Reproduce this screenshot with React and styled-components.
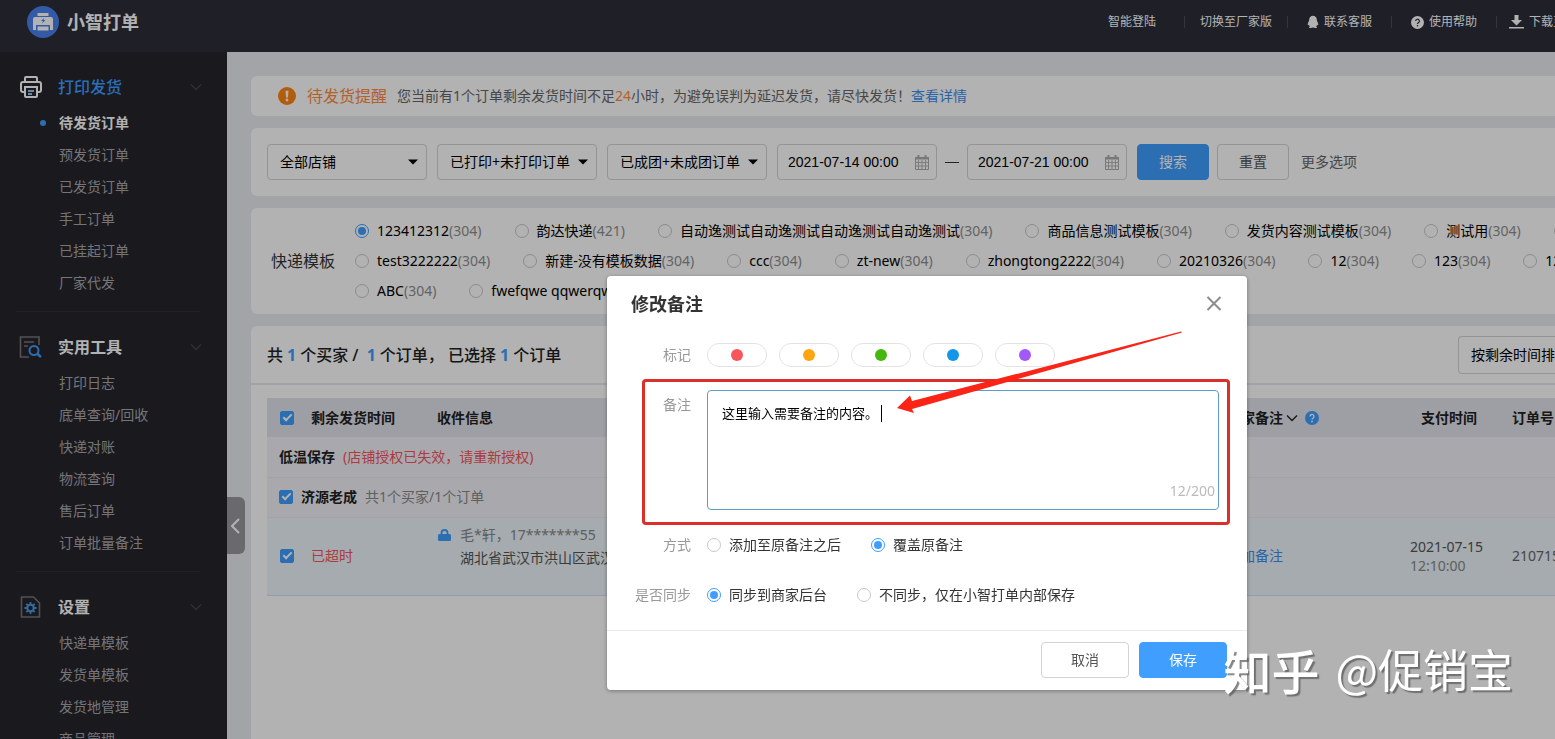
import React, { useState } from "react";
import styled, { createGlobalStyle } from "styled-components";

const sans = `"Noto Sans", "Noto Sans CJK SC", sans-serif`;
const blue = "#409eff";

const GlobalStyle = createGlobalStyle`
  *, *::before, *::after { box-sizing: border-box; }
  body { margin: 0; font: 14px/20px ${sans}; color: #333; overflow: hidden; }
  button, input, select, textarea { font: inherit; color: inherit; margin: 0; }
  a { text-decoration: none; color: inherit; }
  ul { list-style: none; margin: 0; padding: 0; }
  svg { display: block; flex: none; }
`;

const Page = styled.div`
  display: flex;
  flex-direction: column;
  height: 100vh;
  overflow: hidden;
`;

/* ---------- header ---------- */

const Header = styled.header`
  flex: none;
  display: flex;
  align-items: center;
  justify-content: space-between;
  height: 52px;
  padding: 0 0 8px 27px;
  background: #2b2d39;
  color: #fff;
`;

const Brand = styled.a`
  display: flex;
  align-items: center;
  gap: 8px;
  font-size: 18px;
  font-weight: 700;
  line-height: 24px;
`;

const TopNav = styled.nav`
  display: flex;
  align-items: center;
`;

const TopLink = styled.a`
  display: flex;
  align-items: center;
  gap: 5px;
  height: 12px;
  padding: 0 ${(p) => p.$pad}px;
  border-right: 1px solid #4a4b57;
  font-size: 12px;
  line-height: 18px;
  white-space: nowrap;
`;

const EdgeLink = styled(TopLink)`
  width: 58px;
  padding-right: 0;
  border-right: 0;
  height: 18px;
  overflow: hidden;
`;

/* ---------- sidebar ---------- */

const Body = styled.div`
  flex: 1;
  display: flex;
  min-height: 0;
`;

const Sidebar = styled.aside`
  flex: none;
  width: 227px;
  padding-top: 15px;
  background: #25252c;
  overflow: hidden;
`;

const Group = styled.section`
  & + &::before {
    content: "";
    display: block;
    height: 1px;
    margin: 12px 27px 15px 16px;
    background: #303038;
  }
`;

const GroupTitle = styled.button`
  display: grid;
  grid-template-columns: 24px 1fr 12px;
  column-gap: 15px;
  align-items: center;
  width: 100%;
  height: 40px;
  padding: 0 25px 0 19px;
  border: 0;
  background: none;
  color: ${(p) => (p.$active ? blue : "#fff")};
  font-size: 16px;
  font-weight: ${(p) => (p.$active ? 500 : 700)};
  text-align: left;
`;

const MenuLink = styled.a`
  display: flex;
  align-items: center;
  height: 32px;
  padding-left: 40px;
  color: ${(p) => (p.$active ? "#fff" : "#a8a8ac")};
  font-weight: ${(p) => (p.$active ? 700 : 400)};
  &::before {
    content: "";
    width: 6px;
    height: 6px;
    margin-right: 13px;
    border-radius: 50%;
    background: ${(p) => (p.$active ? blue : "transparent")};
  }
`;

/* ---------- content ---------- */

const Content = styled.main`
  position: relative;
  flex: 1;
  min-width: 0;
  display: flex;
  flex-direction: column;
  gap: 12px;
  padding: 24px 0 0 24px;
  background: #e9ebf0;
`;

const Fold = styled.button`
  position: absolute;
  left: 0;
  top: 445px;
  display: grid;
  place-items: center;
  width: 18px;
  height: 57px;
  padding: 0;
  border: 0;
  border-radius: 0 6px 6px 0;
  background: #98999e;
`;

const Card = styled.section`
  background: #fff;
  border-radius: 6px 0 0 6px;
`;

const Notice = styled(Card)`
  display: flex;
  align-items: center;
  height: 40px;
  padding-left: 27px;
  color: #666;
  white-space: nowrap;
`;

const NoticeTitle = styled.strong`
  margin: 0 10px 0 11px;
  font-size: 16px;
  font-weight: 400;
  color: #ff8b3d;
`;

const Orange = styled.span`
  color: #ff8b3d;
`;

const BlueLink = styled.a`
  color: #3d8ef0;
`;

const Filters = styled(Card)`
  display: flex;
  align-items: center;
  gap: 10px;
  padding: 16px;
  white-space: nowrap;
`;

const Field = styled.label`
  display: flex;
  align-items: center;
  position: relative;
  width: 160px;
  height: 36px;
  border: 1px solid #d4d4d6;
  border-radius: 4px;
  color: #000;
  svg {
    position: absolute;
    right: ${(p) => p.$inset || 8}px;
    pointer-events: none;
  }
`;

const Select = styled.select`
  appearance: none;
  width: 100%;
  height: 100%;
  padding: 0 8px 0 12px;
  border: 0;
  background: none;
`;

const DateInput = styled.input`
  width: 100%;
  height: 100%;
  padding: 0 10px;
  border: 0;
  background: none;
  font-family: "Liberation Sans", sans-serif;
`;

const Dash = styled.span`
  width: 10px;
  display: flex;
  justify-content: center;
  &::before {
    content: "";
    flex: none;
    width: 14px;
    height: 1px;
    background: #333;
  }
`;

const Button = styled.button`
  width: ${(p) => p.$width || 72}px;
  height: 36px;
  padding: 0;
  border: 1px solid ${(p) => (p.$primary ? blue : "#d4d4d6")};
  border-radius: 4px;
  background: ${(p) => (p.$primary ? blue : "#fff")};
  color: ${(p) => (p.$primary ? "#fff" : "#555")};
`;

const FilterActions = styled.div`
  display: flex;
  align-items: center;
  gap: 8px;
`;

const MoreLink = styled.a`
  margin-left: 2px;
  color: #666;
`;

const Templates = styled(Card).attrs({ as: "fieldset" })`
  display: flex;
  align-items: center;
  gap: 20px;
  margin: 0;
  padding: 8px 0 8px 20px;
  border: 0;
  min-width: 0;
  overflow: hidden;
`;

const TemplateLabel = styled.span`
  flex: none;
  font-size: 16px;
`;

const TemplateRow = styled.div`
  display: flex;
  align-items: center;
  gap: 33px;
  height: 30px;
  white-space: nowrap;
`;

const Choice = styled.label`
  display: flex;
  align-items: center;
  flex: none;
  gap: 8px;
  color: ${(p) => p.$color || "#000"};
`;

const Radio = styled.input.attrs({ type: "radio" })`
  appearance: none;
  flex: none;
  display: grid;
  place-items: center;
  width: 14px;
  height: 14px;
  border: 1px solid #c8c8cc;
  border-radius: 50%;
  background: #fff;
  &:checked { border-color: ${blue}; }
  &:checked::after {
    content: "";
    width: 8px;
    height: 8px;
    border-radius: 50%;
    background: ${blue};
  }
`;

const Count = styled.span`
  color: #8f8f8f;
`;

/* ---------- orders ---------- */

const Orders = styled(Card)`
  flex: 1;
  min-height: 0;
  overflow: hidden;
  border-bottom-left-radius: 0;
`;

const Summary = styled.div`
  display: flex;
  align-items: center;
  justify-content: space-between;
  height: 59px;
  padding-left: 16px;
  border-bottom: 2px solid #e6e8ec;
`;

const SummaryText = styled.p`
  margin: 0;
  font-size: 16px;
  font-weight: 500;
  color: #222;
  white-space: pre;
  b {
    margin: 0 4px;
    color: ${blue};
  }
`;

const SortButton = styled.button`
  width: 97px;
  height: 38px;
  padding: 0 0 0 12px;
  border: 1px solid #d4d4d6;
  border-right: 0;
  border-radius: 4px 0 0 4px;
  background: #fff;
  color: #000;
  text-align: left;
  white-space: nowrap;
  overflow: hidden;
`;

const TableWrap = styled.div`
  padding: 13px 0 0 16px;
`;

const Table = styled.table`
  width: 100%;
  table-layout: fixed;
  border-collapse: collapse;
  th, td {
    padding: 0;
    text-align: left;
    white-space: nowrap;
    overflow: hidden;
  }
`;

const Col = styled.col`
  width: ${(p) => (p.$w ? p.$w + "px" : "auto")};
`;

const HeadRow = styled.tr`
  height: 39px;
  background: #e3e4ec;
  color: #222;
`;

const ShopRow = styled.tr`
  height: 40px;
  background: #f3f3f8;
  border-bottom: 1px solid #e9e9ef;
`;

const OrderRow = styled.tr`
  height: 78px;
  background: #edf5fa;
  border-bottom: 1px solid #d5e1ee;
`;

const Inline = styled.div`
  display: flex;
  align-items: center;
  gap: ${(p) => p.$gap || 8}px;
  padding-left: ${(p) => p.$left || 0}px;
`;

const PayHead = styled.div`
  padding-right: 24px;
  text-align: center;
`;

const PayTime = styled.div`
  line-height: 19px;
  color: #555;
  span {
    display: block;
    color: #888;
  }
`;

const Buyer = styled.div`
  display: grid;
  grid-template-columns: 15px 1fr;
  column-gap: 8px;
  align-items: center;
  line-height: 23px;
  color: #555;
  padding-bottom: 20px;
  svg { justify-self: center; }
  p { margin: 0; }
  p:first-of-type { color: #888; }
  p:last-of-type { grid-column: 2; }
`;

const Danger = styled.span`
  color: #f5555d;
`;

const Muted = styled.span`
  color: #888;
`;

const OrderNo = styled.span`
  color: #666;
`;

const ShopName = styled.b`
  color: #222;
`;

const Check = styled.input.attrs({ type: "checkbox" })`
  appearance: none;
  flex: none;
  display: grid;
  place-items: center;
  width: 14px;
  height: 14px;
  border: 1px solid #c8c8cc;
  border-radius: 2px;
  background: #fff;
  &:checked {
    border-color: ${blue};
    background: ${blue};
  }
  &:checked::after {
    content: "";
    width: 9px;
    height: 5px;
    margin-bottom: 3px;
    border: solid #fff;
    border-width: 0 0 2px 2px;
    transform: rotate(-45deg);
  }
`;

/* ---------- dialog ---------- */

const Overlay = styled.div`
  position: fixed;
  inset: 0;
  display: flex;
  justify-content: center;
  align-items: flex-start;
  padding: 276px 0 0 299px;
  background: rgba(0, 0, 0, 0.3);
`;

const Dialog = styled.form`
  position: relative;
  width: 640px;
  border-radius: 4px;
  background: #fff;
  box-shadow: 0 1px 4px rgba(0, 0, 0, 0.35);
`;

const DialogHead = styled.div`
  display: flex;
  align-items: center;
  justify-content: space-between;
  height: 56px;
  padding: 0 24px;
  h2 {
    margin: 0;
    font-size: 18px;
    line-height: 24px;
    color: #333;
  }
`;

const CloseButton = styled.button`
  padding: 0;
  border: 0;
  background: none;
`;

const FormBody = styled.div`
  padding: 0 28px 10px 24px;
`;

const FormRow = styled.div`
  display: grid;
  grid-template-columns: 60px 1fr;
  column-gap: 16px;
  align-items: ${(p) => (p.$top ? "start" : "center")};
  min-height: ${(p) => p.$height || 50}px;
`;

const FormLabel = styled.label`
  color: #999;
  text-align: right;
  white-space: nowrap;
  padding-top: ${(p) => p.$drop || 0}px;
`;

const Marks = styled.div`
  display: flex;
  gap: 12px;
`;

const Mark = styled.button`
  display: grid;
  place-items: center;
  width: 60px;
  height: 24px;
  padding: 0;
  border: 1px solid #e4e4e7;
  border-radius: 12px;
  background: #fff;
  &::after {
    content: "";
    width: 12px;
    height: 12px;
    border-radius: 50%;
    background: ${(p) => p.$color};
  }
`;

const NoteSlot = styled.div`
  padding-top: 12px;
`;

const NoteBox = styled.div`
  position: relative;
  height: 120px;
`;

const NoteInput = styled.textarea`
  display: block;
  width: 100%;
  height: 100%;
  padding: 12px 14px;
  border: 1px solid #5c9fc4;
  border-radius: 4px;
  outline: 0;
  resize: none;
  background: #fff;
  color: #000;
  font-size: 13px;
`;

const Caret = styled.i`
  position: absolute;
  left: 174px;
  top: 15px;
  width: 1px;
  height: 17px;
  background: #000;
`;

const NoteCount = styled.output`
  position: absolute;
  right: 4px;
  bottom: 9px;
  color: #bbb;
`;

const Options = styled.div`
  display: flex;
  gap: 30px;
`;

const DialogFoot = styled.div`
  display: flex;
  justify-content: flex-end;
  gap: 10px;
  padding: 11px 20px 12px;
  border-top: 1px solid #ebebeb;
`;

const RedFrame = styled.div`
  position: absolute;
  left: 35px;
  top: 103px;
  width: 588px;
  height: 146px;
  border: 3px solid #d9302a;
  border-radius: 4px;
  pointer-events: none;
`;

const Arrow = styled.svg`
  position: absolute;
  left: 288px;
  top: 54px;
  pointer-events: none;
`;

const Watermark = styled.div`
  position: fixed;
  right: 42px;
  bottom: 38px;
  display: flex;
  align-items: center;
  gap: 16px;
  font: 45px/64px "Noto Sans CJK SC", sans-serif;
  color: #fff;
  text-shadow: 2px 2px 1px rgba(90, 90, 90, 0.75);
  white-space: nowrap;
  pointer-events: none;
  b {
    font-size: 48px;
    font-weight: 500;
  }
`;

/* ---------- icons ---------- */

const LogoIcon = () => (
  <svg width="32" height="32" viewBox="0 0 32 32">
    <circle cx="16" cy="16" r="16" fill="#4a82f0" />
    <path d="M10.500 7h11v3h-11z" fill="#fff" />
    <path d="M8 11h16a2 2 0 0 1 2 2V24h-3v-5H9v5H6V13a2 2 0 0 1 2-2z" fill="#fff" />
    <path d="M10.500 20.500h11v4h-11z" fill="#fff" />
    <path d="M17 12l-3 3h2l-1 2.500 3.500-3.500h-2z" fill="#4a82f0" />
  </svg>
);

const PrinterIcon = () => (
  <svg width="24" height="24" viewBox="0 0 24 24" fill="none" stroke="#fff" strokeWidth="2">
    <path d="M6 7V3a1 1 0 0 1 1-1h10a1 1 0 0 1 1 1v4" />
    <path d="M6 17H4a2 2 0 0 1-2-2V9a2 2 0 0 1 2-2h16a2 2 0 0 1 2 2v6a2 2 0 0 1-2 2h-2" />
    <path d="M6 12h12v9a1 1 0 0 1-1 1H7a1 1 0 0 1-1-1z" />
    <path d="M9 16h6M9 19h4" stroke="#8fc4f5" />
  </svg>
);

const ToolsIcon = () => (
  <svg width="24" height="24" viewBox="0 0 24 24" fill="none" stroke="#77777b" strokeWidth="1.600">
    <path d="M20 10V2H1.500v20H10" />
    <path d="M5 7h10M5 11h4" />
    <circle cx="15" cy="15.500" r="4.500" stroke={blue} strokeWidth="2" />
    <path d="M18.500 19l3.500 3" stroke={blue} strokeWidth="2.500" />
  </svg>
);

const SettingsIcon = () => (
  <svg width="24" height="24" viewBox="0 0 24 24" fill="none">
    <path d="M2.500 2h12l6 6v14h-18z" stroke="#77777b" strokeWidth="1.600" strokeLinejoin="round" />
    <g stroke="#4b9be8" strokeWidth="2">
      <circle cx="11.500" cy="13" r="3.200" />
      <path d="M11.500 7v3M11.500 16v3M5.500 13h3M14.500 13h3M7.300 8.800l2 2M13.700 15.200l2 2M15.700 8.800l-2 2M9.300 15.200l-2 2" strokeWidth="1.800" />
    </g>
  </svg>
);

const Chevron = ({ color = "#45454d" }) => (
  <svg width="12" height="8" viewBox="0 0 12 8" fill="none" stroke={color} strokeWidth="1.400">
    <path d="M1 1.500l5 5 5-5" />
  </svg>
);

const Triangle = () => (
  <svg width="10" height="6" viewBox="0 0 10 6">
    <path d="M0 .5h10L5 5.500z" fill="#000" />
  </svg>
);

const CalendarIcon = () => (
  <svg width="14" height="15" viewBox="0 0 14 15" fill="none" stroke="#adadad">
    <path d="M.5 2.500h13v12H.5z" />
    <path d="M0 3.500h14" strokeWidth="2" />
    <path d="M3.500 0v3M10.500 0v3" strokeWidth="2" />
    <path d="M3.500 5v9M7 5v9M10.500 5v9M1 7.500h12M1 11h12" strokeWidth=".9" />
  </svg>
);

const QQIcon = () => (
  <svg width="12" height="14" viewBox="0 0 12 14" fill="#fff">
    <path d="M6 .8c2.300 0 3.800 1.700 3.800 3.900 0 .7.100 1 .5 1.700.7 1.200 1.200 2.600.9 3.700-.2.500-.7.200-1.200-.4-.1.700-.4 1.200-.9 1.700.7.300 1 .6.900 1.100-.3.700-2.700.6-4 .1-1.300.5-3.700.6-4-.1-.1-.5.200-.8.900-1.100-.5-.5-.8-1-.9-1.700-.5.600-1 .9-1.200.4-.3-1.100.2-2.500.9-3.700.4-.7.500-1 .5-1.700C2.200 2.500 3.700.8 6 .8z" />
  </svg>
);

const HelpIcon = ({ size = 13, bg = "#fff", fg = "#2b2d39" }) => (
  <svg width={size} height={size} viewBox="0 0 14 14">
    <circle cx="7" cy="7" r="7" fill={bg} />
    <path d="M5 5.500a2 2 0 1 1 3 1.700c-.7.400-1 .7-1 1.400" fill="none" stroke={fg} strokeWidth="1.300" />
    <circle cx="7" cy="10.500" r=".9" fill={fg} />
  </svg>
);

const DownloadIcon = () => (
  <svg width="15" height="14" viewBox="0 0 15 14" fill="#fff">
    <path d="M5.500 0h4v5h3.500L7.500 10.500 2 5h3.500zM0 12h15v1.500H0z" />
  </svg>
);

const WarnIcon = () => (
  <svg width="18" height="18" viewBox="0 0 18 18">
    <circle cx="9" cy="9" r="9" fill="#ff8412" />
    <path d="M7.500 3.800h3L10 10.500H8z" fill="#fff" />
    <circle cx="9" cy="13" r="1.400" fill="#fff" />
  </svg>
);

const LockIcon = () => (
  <svg width="13" height="12" viewBox="0 0 13 12">
    <path d="M3.500 6V4a3 3 0 0 1 6 0v2" fill="none" stroke={blue} strokeWidth="1.800" />
    <rect x="0" y="5" width="13" height="7" rx="1.500" fill={blue} />
  </svg>
);

/* ---------- data ---------- */

const menu = [
  {
    title: "打印发货",
    Icon: PrinterIcon,
    active: true,
    items: ["待发货订单", "预发货订单", "已发货订单", "手工订单", "已挂起订单", "厂家代发"],
  },
  {
    title: "实用工具",
    Icon: ToolsIcon,
    items: ["打印日志", "底单查询/回收", "快递对账", "物流查询", "售后订单", "订单批量备注"],
  },
  {
    title: "设置",
    Icon: SettingsIcon,
    items: ["快递单模板", "发货单模板", "发货地管理", "商品管理"],
  },
];

const templates = [
  [
    ["123412312", 304],
    ["韵达快递", 421],
    ["自动逸测试自动逸测试自动逸测试自动逸测试", 304],
    ["商品信息测试模板", 304],
    ["发货内容测试模板", 304],
    ["测试用", 304],
    ["测试", 304],
  ],
  [
    ["test3222222", 304],
    ["新建-没有模板数据", 304],
    ["ccc", 304],
    ["zt-new", 304],
    ["zhongtong2222", 304],
    ["20210326", 304],
    ["12", 304],
    ["123", 304],
    ["1234", 304],
  ],
  [
    ["ABC", 304],
    ["fwefqwe qqwerqwer", 304],
  ],
];

const marks = [
  ["红色", "#f7575c"],
  ["橙色", "#ffa50f"],
  ["绿色", "#45b80c"],
  ["蓝色", "#1296e8"],
  ["紫色", "#a259f7"],
];

const SelectField = ({ label, value }) => (
  <Field>
    <Select aria-label={label} defaultValue={value}>
      <option>{value}</option>
    </Select>
    <Triangle />
  </Field>
);

const DateField = ({ label, value }) => (
  <Field $inset={7}>
    <DateInput type="text" aria-label={label} defaultValue={value} />
    <CalendarIcon />
  </Field>
);

function NoteArea({ note, setNote }) {
  return (
    <NoteSlot>
      <NoteBox>
        <NoteInput id="note" maxLength={200} value={note} onChange={(e) => setNote(e.target.value)} />
        <Caret />
        <NoteCount htmlFor="note">{note.length}/200</NoteCount>
      </NoteBox>
    </NoteSlot>
  );
}

export default function App() {
  const [note, setNote] = useState("这里输入需要备注的内容。");

  return (
    <Page lang="zh-CN">
      <GlobalStyle />
      <Header>
        <Brand href="#">
          <LogoIcon />
          小智打单
        </Brand>
        <TopNav>
          <TopLink href="#" $pad={28}>智能登陆</TopLink>
          <TopLink href="#" $pad={15}>切换至厂家版</TopLink>
          <TopLink href="#" $pad={19}><QQIcon />联系客服</TopLink>
          <TopLink href="#" $pad={19}><HelpIcon />使用帮助</TopLink>
          <EdgeLink href="#" $pad={12}><DownloadIcon />下载至桌面</EdgeLink>
        </TopNav>
      </Header>

      <Body>
        <Sidebar>
          {menu.map(({ title, Icon, active, items }) => (
            <Group key={title}>
              <GroupTitle type="button" $active={active}>
                <Icon />
                {title}
                <Chevron />
              </GroupTitle>
              <ul>
                {items.map((item, i) => (
                  <li key={item}>
                    <MenuLink href="#" $active={active && i === 0}>{item}</MenuLink>
                  </li>
                ))}
              </ul>
            </Group>
          ))}
        </Sidebar>

        <Content>
          <Notice>
            <WarnIcon />
            <NoticeTitle>待发货提醒</NoticeTitle>
            <span>
              您当前有1个订单剩余发货时间不足<Orange>24</Orange>小时，为避免误判为延迟发货，请尽快发货！
            </span>
            <BlueLink href="#">查看详情</BlueLink>
          </Notice>

          <Filters>
            <SelectField label="店铺" value="全部店铺" />
            <SelectField label="打印状态" value="已打印+未打印订单" />
            <SelectField label="成团状态" value="已成团+未成团订单" />
            <DateField label="开始时间" value="2021-07-14 00:00" />
            <Dash />
            <DateField label="结束时间" value="2021-07-21 00:00" />
            <FilterActions>
              <Button type="button" $primary>搜索</Button>
              <Button type="button">重置</Button>
            </FilterActions>
            <MoreLink href="#">更多选项</MoreLink>
          </Filters>

          <Templates>
            <TemplateLabel>快递模板</TemplateLabel>
            <div>
              {templates.map((row, r) => (
                <TemplateRow key={r}>
                  {row.map(([name, count], i) => (
                    <Choice key={name}>
                      <Radio name="template" defaultChecked={r === 0 && i === 0} />
                      <span>{name}<Count>({count})</Count></span>
                    </Choice>
                  ))}
                </TemplateRow>
              ))}
            </div>
          </Templates>

          <Orders>
            <Summary>
              <SummaryText>
                共<b>1</b>个买家 / <b>1</b>个订单， 已选择<b>1</b>个订单
              </SummaryText>
              <SortButton type="button">按剩余时间排序</SortButton>
            </Summary>
            <TableWrap>
              <Table>
                <colgroup>
                  <Col $w={44} />
                  <Col $w={126} />
                  <Col />
                  <Col $w={183} />
                  <Col $w={102} />
                  <Col $w={43} />
                </colgroup>
                <thead>
                  <HeadRow>
                    <th><Inline $left={13}><Check aria-label="全选" defaultChecked /></Inline></th>
                    <th>剩余发货时间</th>
                    <th>收件信息</th>
                    <th>
                      <Inline $gap={3}>
                        卖家备注
                        <Chevron color="#222" />
                        <Inline $left={4}><HelpIcon size={14} bg={blue} fg="#fff" /></Inline>
                      </Inline>
                    </th>
                    <th><PayHead>支付时间</PayHead></th>
                    <th>订单号</th>
                  </HeadRow>
                </thead>
                <tbody>
                  <ShopRow>
                    <td colSpan={6}>
                      <Inline $left={12}>
                        <ShopName>低温保存</ShopName>
                        <Danger>(店铺授权已失效，请重新授权)</Danger>
                      </Inline>
                    </td>
                  </ShopRow>
                  <ShopRow>
                    <td colSpan={6}>
                      <Inline $left={12}>
                        <Check aria-label="选择店铺济源老成" defaultChecked />
                        <ShopName>济源老成</ShopName>
                        <Muted>共1个买家/1个订单</Muted>
                      </Inline>
                    </td>
                  </ShopRow>
                  <OrderRow>
                    <td><Inline $left={13}><Check aria-label="选择订单" defaultChecked /></Inline></td>
                    <td><Danger>已超时</Danger></td>
                    <td>
                      <Buyer>
                        <LockIcon />
                        <p>毛*轩，17*******55</p>
                        <p>湖北省武汉市洪山区武汉大学</p>
                      </Buyer>
                    </td>
                    <td><BlueLink href="#">添加备注</BlueLink></td>
                    <td><PayTime>2021-07-15<span>12:10:00</span></PayTime></td>
                    <td><OrderNo>210715</OrderNo></td>
                  </OrderRow>
                </tbody>
              </Table>
            </TableWrap>
          </Orders>

          <Fold type="button" aria-label="收起菜单">
            <svg width="10" height="16" viewBox="0 0 10 16" fill="none" stroke="#fff" strokeWidth="2">
              <path d="M8 1L1 8l7 7" />
            </svg>
          </Fold>
        </Content>
      </Body>

      <Overlay>
        <Dialog role="dialog" aria-labelledby="note-title" onSubmit={(e) => e.preventDefault()}>
          <DialogHead>
            <h2 id="note-title">修改备注</h2>
            <CloseButton type="button" aria-label="关闭">
              <svg width="18" height="18" viewBox="0 0 18 18" stroke="#8c8c8c" strokeWidth="2">
                <path d="M2.500 2l13 13M15.500 2l-13 13" />
              </svg>
            </CloseButton>
          </DialogHead>
          <FormBody>
            <FormRow $height={46}>
              <FormLabel as="span">标记</FormLabel>
              <Marks>
                {marks.map(([name, color]) => (
                  <Mark key={name} type="button" aria-label={name} $color={color} />
                ))}
              </Marks>
            </FormRow>
            <FormRow $top $height={142}>
              <FormLabel htmlFor="note" $drop={17}>备注</FormLabel>
              <NoteArea note={note} setNote={setNote} />
            </FormRow>
            <FormRow>
              <FormLabel as="span">方式</FormLabel>
              <Options>
                <Choice $color="#333"><Radio name="mode" />添加至原备注之后</Choice>
                <Choice $color="#333"><Radio name="mode" defaultChecked />覆盖原备注</Choice>
              </Options>
            </FormRow>
            <FormRow>
              <FormLabel as="span">是否同步</FormLabel>
              <Options>
                <Choice $color="#333"><Radio name="sync" defaultChecked />同步到商家后台</Choice>
                <Choice $color="#333"><Radio name="sync" />不同步，仅在小智打单内部保存</Choice>
              </Options>
            </FormRow>
          </FormBody>
          <DialogFoot>
            <Button type="button" $width={88}>取消</Button>
            <Button type="submit" $width={88} $primary>保存</Button>
          </DialogFoot>
          <RedFrame />
          <Arrow width="290" height="90" viewBox="0 0 290 90">
            <path d="M2 78L15 65.500 17 71 286 1.500 287 2.500 17 79 19 83z" fill="#fb2416" />
          </Arrow>
        </Dialog>
      </Overlay>

      <Watermark>
        <b>知乎</b>
        <span>@促销宝</span>
      </Watermark>
    </Page>
  );
}
